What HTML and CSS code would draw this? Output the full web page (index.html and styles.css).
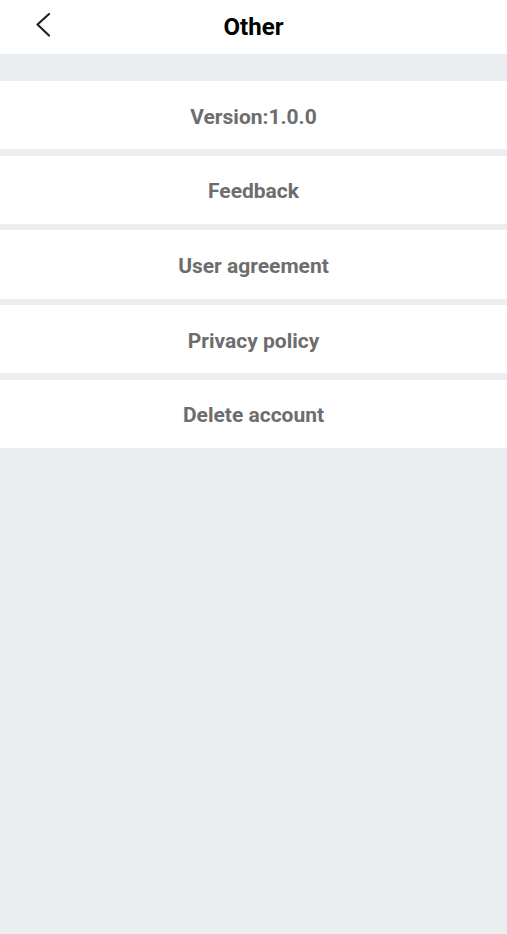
FILE: index.html
```html
<!DOCTYPE html>
<html>
<head>
<meta charset="utf-8">
<link rel="stylesheet" href="styles.css">
</head>
<body>
<div class="page">
  <header class="header">
    <button class="back" aria-label="Back">
      <svg width="18" height="26" viewBox="0 0 18 26"><path d="M14 2 L2.5 12.5 L14 23.5" fill="none" stroke="#222" stroke-width="2.2" stroke-linecap="round" stroke-linejoin="round"/></svg>
    </button>
    <h1 class="title">Other</h1>
  </header>
  <div class="spacer"></div>
  <ul class="list">
    <li class="item">Version:1.0.0</li>
    <li class="item">Feedback</li>
    <li class="item">User agreement</li>
    <li class="item">Privacy policy</li>
    <li class="item">Delete account</li>
  </ul>
</div>
</body>
</html>
```
FILE: styles.css
```css
html, body {
  margin: 0;
  padding: 0;
  height: 100%;
  background: #ebeef1;
  font-family: Roboto, "Liberation Sans", sans-serif;
}
.page {
  min-height: 100%;
}
.header {
  height: 54px;
  background: #fff;
  display: flex;
  align-items: center;
  justify-content: center;
  position: relative;
}
.back {
  position: absolute;
  left: 35px;
  top: 12px;
  padding: 0;
  border: 0;
  background: none;
  width: 18px;
  height: 26px;
  display: flex;
}
.title {
  margin: 0;
  font-size: 24px;
  font-weight: 700;
  color: #000;
  line-height: 1;
}
.spacer {
  height: 27px;
}
.list {
  list-style: none;
  margin: 0;
  padding: 0;
  display: flex;
  flex-direction: column;
  gap: 6.4px;
}
.item {
  height: 68.3px;
  box-sizing: border-box;
  padding-top: 3px;
  background: #fff;
  display: flex;
  align-items: center;
  justify-content: center;
  font-size: 21px;
  font-weight: 700;
  color: #6d6d6d;
}
```
